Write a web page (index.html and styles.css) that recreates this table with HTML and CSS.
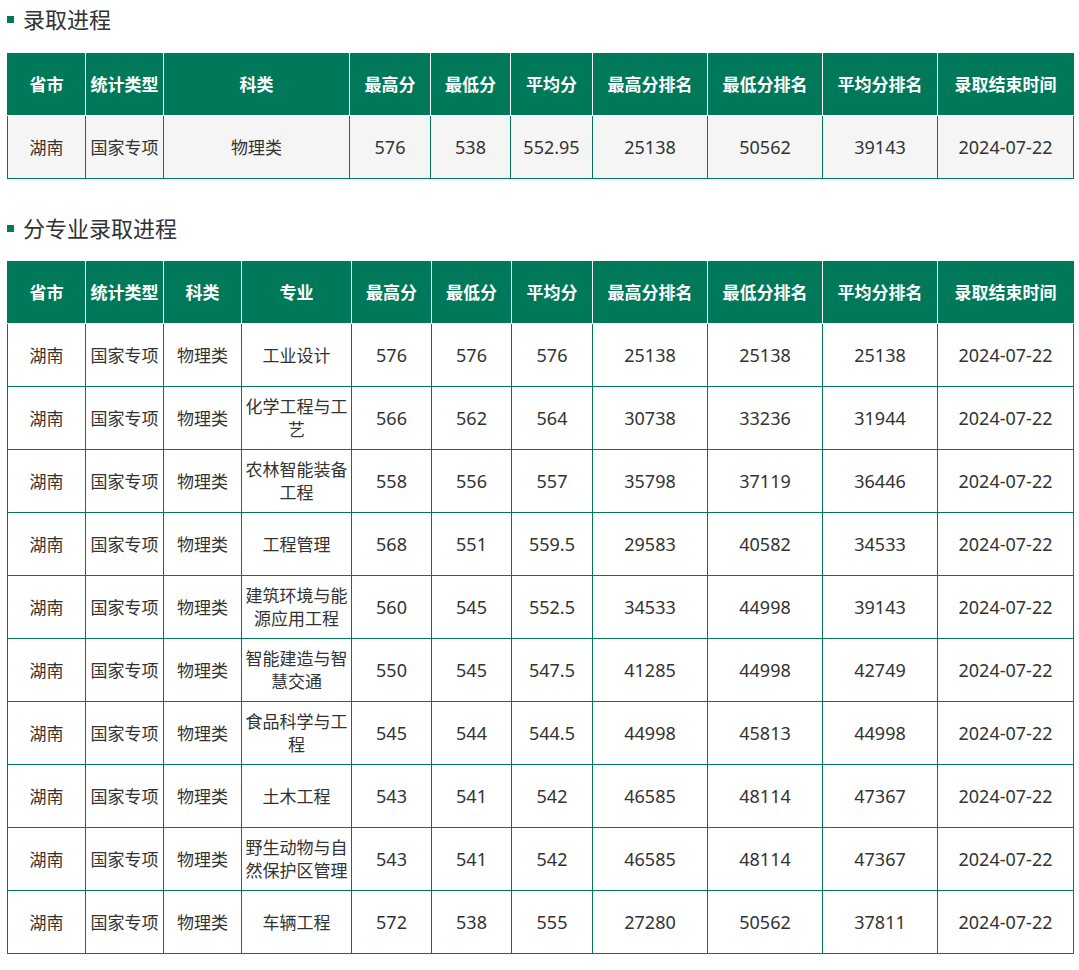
FILE: index.html
```html
<!DOCTYPE html>
<html lang="zh-CN">
<head>
<meta charset="utf-8">
<title>录取进程</title>
<link rel="stylesheet" href="styles.css">
</head>
<body>
<div class="page">
  <h2 class="title"><span class="bullet"></span>录取进程</h2>
  <table class="grid shaded">
    <colgroup>
      <col class="w78"><col class="w78"><col class="w186"><col class="w81"><col class="w80"><col class="w82"><col class="w115"><col class="w115"><col class="w115"><col class="w136">
    </colgroup>
    <thead>
      <tr><th>省市</th><th>统计类型</th><th>科类</th><th>最高分</th><th>最低分</th><th>平均分</th><th>最高分排名</th><th>最低分排名</th><th>平均分排名</th><th>录取结束时间</th></tr>
    </thead>
    <tbody>
      <tr><td>湖南</td><td>国家专项</td><td>物理类</td><td class="num">576</td><td class="num">538</td><td class="num">552.95</td><td class="num">25138</td><td class="num">50562</td><td class="num">39143</td><td class="num">2024-07-22</td></tr>
    </tbody>
  </table>

  <h2 class="title second"><span class="bullet"></span>分专业录取进程</h2>
  <table class="grid">
    <colgroup>
      <col class="w78"><col class="w78"><col class="w78"><col class="w110"><col class="w80"><col class="w80"><col class="w81"><col class="w115"><col class="w115"><col class="w115"><col class="w136">
    </colgroup>
    <thead>
      <tr><th>省市</th><th>统计类型</th><th>科类</th><th>专业</th><th>最高分</th><th>最低分</th><th>平均分</th><th>最高分排名</th><th>最低分排名</th><th>平均分排名</th><th>录取结束时间</th></tr>
    </thead>
    <tbody>
      <tr><td>湖南</td><td>国家专项</td><td>物理类</td><td>工业设计</td><td class="num">576</td><td class="num">576</td><td class="num">576</td><td class="num">25138</td><td class="num">25138</td><td class="num">25138</td><td class="num">2024-07-22</td></tr>
      <tr><td>湖南</td><td>国家专项</td><td>物理类</td><td>化学工程与工艺</td><td class="num">566</td><td class="num">562</td><td class="num">564</td><td class="num">30738</td><td class="num">33236</td><td class="num">31944</td><td class="num">2024-07-22</td></tr>
      <tr><td>湖南</td><td>国家专项</td><td>物理类</td><td>农林智能装备工程</td><td class="num">558</td><td class="num">556</td><td class="num">557</td><td class="num">35798</td><td class="num">37119</td><td class="num">36446</td><td class="num">2024-07-22</td></tr>
      <tr><td>湖南</td><td>国家专项</td><td>物理类</td><td>工程管理</td><td class="num">568</td><td class="num">551</td><td class="num">559.5</td><td class="num">29583</td><td class="num">40582</td><td class="num">34533</td><td class="num">2024-07-22</td></tr>
      <tr><td>湖南</td><td>国家专项</td><td>物理类</td><td>建筑环境与能源应用工程</td><td class="num">560</td><td class="num">545</td><td class="num">552.5</td><td class="num">34533</td><td class="num">44998</td><td class="num">39143</td><td class="num">2024-07-22</td></tr>
      <tr><td>湖南</td><td>国家专项</td><td>物理类</td><td>智能建造与智慧交通</td><td class="num">550</td><td class="num">545</td><td class="num">547.5</td><td class="num">41285</td><td class="num">44998</td><td class="num">42749</td><td class="num">2024-07-22</td></tr>
      <tr><td>湖南</td><td>国家专项</td><td>物理类</td><td>食品科学与工程</td><td class="num">545</td><td class="num">544</td><td class="num">544.5</td><td class="num">44998</td><td class="num">45813</td><td class="num">44998</td><td class="num">2024-07-22</td></tr>
      <tr><td>湖南</td><td>国家专项</td><td>物理类</td><td>土木工程</td><td class="num">543</td><td class="num">541</td><td class="num">542</td><td class="num">46585</td><td class="num">48114</td><td class="num">47367</td><td class="num">2024-07-22</td></tr>
      <tr><td>湖南</td><td>国家专项</td><td>物理类</td><td>野生动物与自然保护区管理</td><td class="num">543</td><td class="num">541</td><td class="num">542</td><td class="num">46585</td><td class="num">48114</td><td class="num">47367</td><td class="num">2024-07-22</td></tr>
      <tr><td>湖南</td><td>国家专项</td><td>物理类</td><td>车辆工程</td><td class="num">572</td><td class="num">538</td><td class="num">555</td><td class="num">27280</td><td class="num">50562</td><td class="num">37811</td><td class="num">2024-07-22</td></tr>
    </tbody>
  </table>
</div>
</body>
</html>
```

FILE: styles.css
```css
html, body {
  margin: 0;
  padding: 0;
  background: #ffffff;
}

body {
  font-family: "Noto Sans", "Noto Sans CJK SC", sans-serif;
  color: #333333;
}

.page {
  padding: 0 0 0 7px;
  width: 1067px;
}

.title {
  display: flex;
  align-items: center;
  height: 38px;
  margin: 0 0 15px 0;
  font-size: 22px;
  font-weight: normal;
  line-height: 38px;
  color: #333333;
}

.title.second {
  margin-top: 30px;
  margin-bottom: 14px;
}

.bullet {
  display: inline-block;
  width: 7px;
  height: 7px;
  background: #00795a;
  margin-right: 9px;
}

.grid {
  width: 1067px;
  border-collapse: collapse;
  table-layout: fixed;
  font-size: 17px;
}

.grid th,
.grid td {
  text-align: center;
  vertical-align: middle;
  padding: 0 3px;
  line-height: 23px;
  word-break: break-all;
}

.grid th {
  height: 61px;
  background: #00795a;
  color: #ffffff;
  font-weight: bold;
  border: 1px solid #ffffff;
  border-top-color: #00795a;
}

.grid th:first-child {
  border-left-color: #00795a;
}

.grid th:last-child {
  border-right-color: #00795a;
}

.grid td {
  height: 62px;
  border: 1px solid #00795a;
  color: #333333;
  background: #ffffff;
}

.grid td.num {
  font-size: 18px;
}

.grid.shaded td {
  background: #f5f5f5;
}

.w78 { width: 78px; }
.w80 { width: 80px; }
.w81 { width: 81px; }
.w82 { width: 82px; }
.w110 { width: 110px; }
.w115 { width: 115px; }
.w136 { width: 136px; }
.w186 { width: 186px; }
```
